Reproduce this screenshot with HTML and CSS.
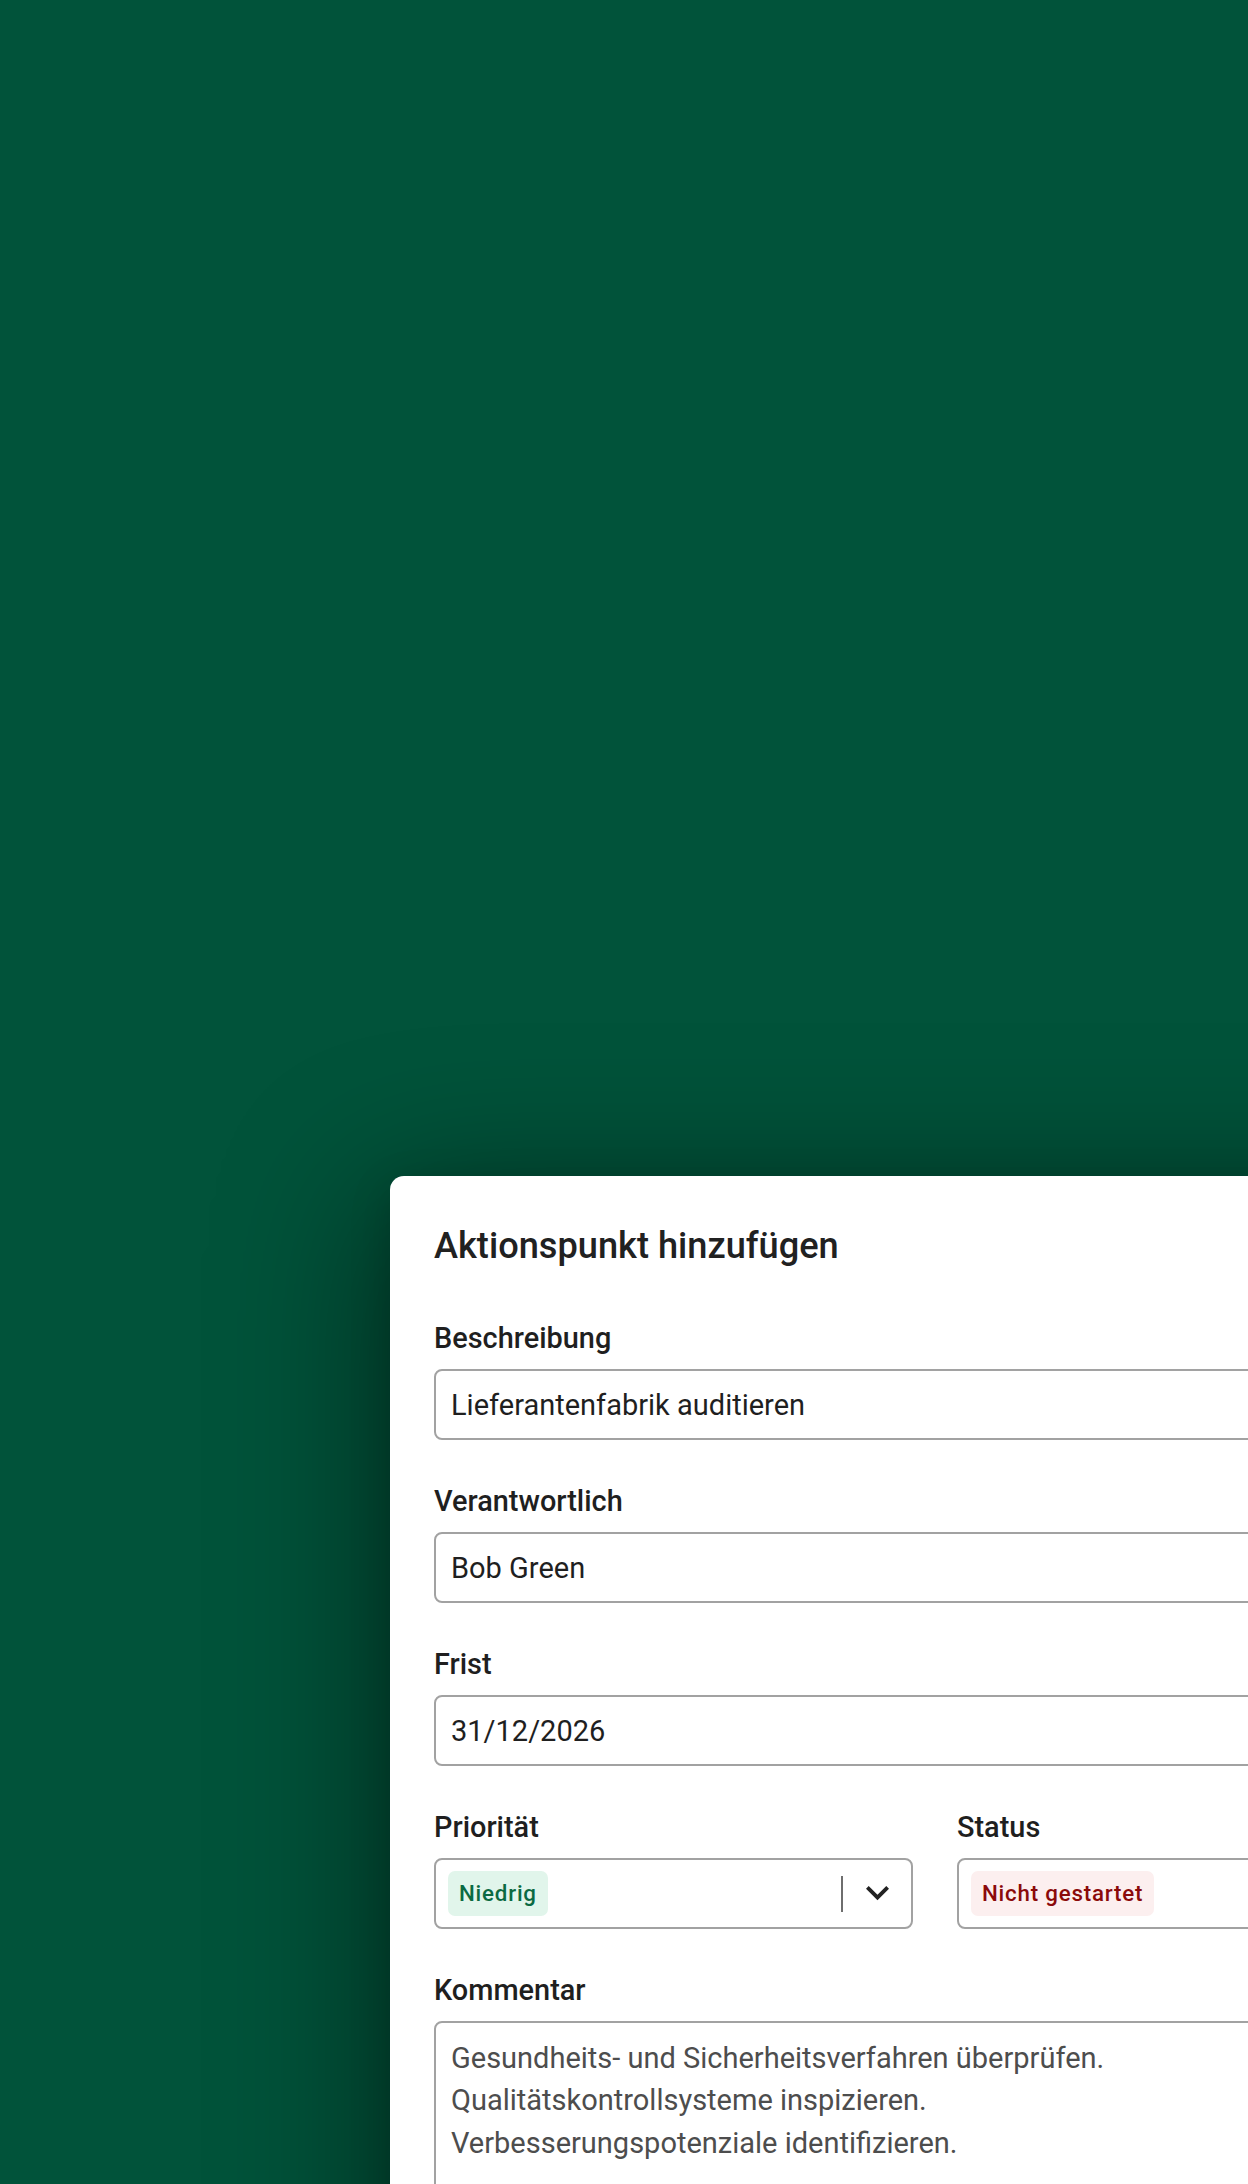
FILE: index.html
```html
<!DOCTYPE html>
<html lang="de">
<head>
<meta charset="utf-8">
<title>Aktionspunkt hinzufügen</title>
<link rel="stylesheet" href="styles.css">
</head>
<body>
<div class="stage">
  <section class="dialog" role="dialog" aria-labelledby="dlg-title">
    <h2 class="dialog-title" id="dlg-title">Aktionspunkt hinzufügen</h2>

    <div class="field">
      <label class="field-label" for="f-desc">Beschreibung</label>
      <input class="text-input" id="f-desc" type="text" value="Lieferantenfabrik auditieren">
    </div>

    <div class="field">
      <label class="field-label" for="f-owner">Verantwortlich</label>
      <input class="text-input" id="f-owner" type="text" value="Bob Green">
    </div>

    <div class="field">
      <label class="field-label" for="f-due">Frist</label>
      <input class="text-input" id="f-due" type="text" value="31/12/2026">
    </div>

    <div class="field-row">
      <div class="field">
        <span class="field-label">Priorität</span>
        <div class="select">
          <span class="chip chip-low">Niedrig</span>
          <span class="select-indicators">
            <span class="select-sep"></span>
            <span class="select-arrow">
              <svg class="chevron" viewBox="6 8.59 12 7.41" aria-hidden="true"><path d="M16.59 8.59 12 13.17 7.41 8.59 6 10l6 6 6-6z"/></svg>
            </span>
          </span>
        </div>
      </div>
      <div class="field">
        <span class="field-label">Status</span>
        <div class="select">
          <span class="chip chip-todo">Nicht gestartet</span>
          <span class="select-indicators">
            <span class="select-sep"></span>
            <span class="select-arrow">
              <svg class="chevron" viewBox="6 8.59 12 7.41" aria-hidden="true"><path d="M16.59 8.59 12 13.17 7.41 8.59 6 10l6 6 6-6z"/></svg>
            </span>
          </span>
        </div>
      </div>
    </div>

    <div class="field">
      <label class="field-label" for="f-comment">Kommentar</label>
      <textarea class="text-area" id="f-comment" rows="5">Gesundheits- und Sicherheitsverfahren überprüfen.
Qualitätskontrollsysteme inspizieren.
Verbesserungspotenziale identifizieren.</textarea>
    </div>
  </section>
</div>
</body>
</html>
```

FILE: styles.css
```css
html, body {
  margin: 0;
  padding: 0;
  height: 2184px;
  overflow: hidden;
  background: #01533a;
}

body {
  font-family: Roboto, "Liberation Sans", Arial, sans-serif;
  color: #1f1f1f;
}

.stage {
  padding: 1176px 0 0 390px;
}

.dialog {
  box-sizing: border-box;
  width: 1090px;
  background: #ffffff;
  border-radius: 14px;
  padding: 44px 44px 80px;
  display: flex;
  flex-direction: column;
  gap: 44px;
  box-shadow: 0 36px 150px 24px rgba(0, 0, 0, 0.42), 0 12px 40px rgba(0, 0, 0, 0.18);
}

.dialog-title {
  margin: 0 0 5px;
  font-size: 36.2px;
  line-height: 52px;
  font-weight: 500;
  color: #212121;
}

.field {
  display: flex;
  flex-direction: column;
  gap: 14px;
  min-width: 0;
}

.field-label {
  display: block;
  font-size: 28.9px;
  line-height: 34px;
  font-weight: 500;
  color: #1f1f1f;
}

.text-input,
.text-area {
  box-sizing: border-box;
  width: 100%;
  margin: 0;
  border: 2px solid #a2a2a2;
  border-radius: 8px;
  background: #ffffff;
  font-family: Roboto, "Liberation Sans", Arial, sans-serif;
  font-size: 29px;
  outline: none;
}

.text-input {
  height: 71px;
  padding: 0 15px;
  color: #1f1f1f;
}

.text-area {
  display: block;
  height: 240px;
  padding: 13.6px 15px;
  line-height: 42.7px;
  color: #4d4d4d;
  resize: none;
}

.field-row {
  display: grid;
  grid-template-columns: 1fr 1fr;
  gap: 44px;
}

.select {
  box-sizing: border-box;
  height: 71px;
  border: 2px solid #a2a2a2;
  border-radius: 8px;
  background: #ffffff;
  display: flex;
  align-items: center;
  padding-left: 12px;
}

.chip {
  display: inline-block;
  height: 45px;
  line-height: 45px;
  padding: 0 11px;
  border-radius: 7px;
  font-size: 22.3px;
  font-weight: 500;
  letter-spacing: 0.8px;
  white-space: nowrap;
}

.chip-low {
  background: #e1f5eb;
  color: #0b6a42;
}

.chip-todo {
  background: #fcefef;
  color: #8b0a0a;
}

.select-indicators {
  margin-left: auto;
  display: flex;
  align-items: center;
  align-self: stretch;
}

.select-sep {
  width: 2px;
  height: 36px;
  background: #6e6e6e;
}

.select-arrow {
  width: 68px;
  display: flex;
  align-items: center;
  justify-content: center;
}

.chevron {
  width: 23px;
  height: 14.2px;
  fill: #222222;
  display: block;
}
```
